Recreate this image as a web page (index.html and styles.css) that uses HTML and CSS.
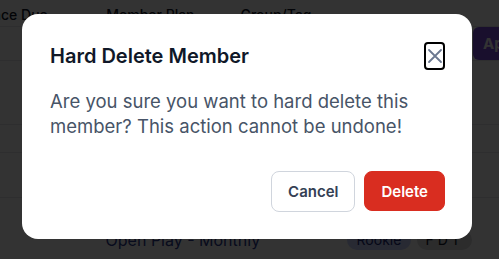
FILE: index.html
```html
<html lang="en">
<head>
<meta charset="UTF-8" />
<meta name="viewport" content="width=device-width, initial-scale=1" />
<title>Members</title>
<link rel="stylesheet" href="styles.css">
</head>
<body>
  <main class="page">
    <div class="table">
      <div class="row head">
        <div class="cell c1">Balance Due</div>
        <div class="cell c2">Member Plan</div>
        <div class="cell c3">Group/Tag</div>
      </div>
      <div class="row r1">
        <div class="cell c1"></div>
        <div class="cell c2"></div>
        <div class="cell c3"></div>
        <button class="apply">Apply</button>
      </div>
      <div class="row r2"></div>
      <div class="row r3"></div>
      <div class="row r4"></div>
      <div class="row r5">
        <div class="cell c1"></div>
        <div class="cell c2 plan">Open Play - Monthly</div>
        <div class="cell c3 tags">
          <span class="badge rookie">Rookie</span>
          <span class="badge grey">FDT</span>
        </div>
      </div>
    </div>
  </main>

  <div class="overlay">
    <div class="modal" role="dialog">
      <div class="modal-head">
        <h2 class="modal-title">Hard Delete Member</h2>
        <button class="close" aria-label="Close">
          <svg width="16" height="16" viewBox="0 0 16 16"><path d="M2 2 L14 14 M14 2 L2 14" stroke="#6b7890" stroke-width="1.8" stroke-linecap="round" fill="none"/></svg>
        </button>
      </div>
      <p class="modal-text">Are you sure you want to hard delete this member? This action cannot be undone!</p>
      <div class="modal-foot">
        <button class="btn cancel">Cancel</button>
        <button class="btn danger">Delete</button>
      </div>
    </div>
  </div>
</body>
</html>
```

FILE: styles.css
```css
*{box-sizing:border-box}
html,body{height:100%}
body{
  margin:0;
  font-family: Inter, "Noto Sans", Arial, sans-serif;
  background:#fff;
  color:#101828;
  overflow:hidden;
}

/* table behind the dialog */
.page{ margin-left:-36px; }
.row{
  display:flex;
  align-items:center;
  border-bottom:1px solid #e4e7ec;
  position:relative;
}
.row.head{ height:27px; align-items:flex-end; padding-bottom:3px; font-size:14px; font-weight:500; color:#101828; }
.row.r1{ height:34px; }
.row.r2{ height:64px; }
.row.r3{ height:28px; }
.row.r4{ height:45px; }
.row.r5{ height:61px; border-bottom:none; align-items:flex-start; padding-top:32px; }
.cell{ font-size:14px; white-space:nowrap; }
.c1{ width:143px; }
.c2{ width:135px; }
.c3{ width:260px; }
.plan{ color:#2b3a8f; font-size:16px; }
.tags{ display:flex; gap:6px; padding-left:106px; }
.badge{
  display:inline-block;
  padding:1px 10px;
  border-radius:999px;
  font-size:14px;
  line-height:18px;
}
.rookie{ background:#c7d2fe; color:#1e2a78; }
.grey{ background:#d9dadc; color:#101828; letter-spacing:4px; padding:1px 8px; }
.apply{
  position:absolute; left:509px; top:0;
  height:33px; width:80px;
  border:none; border-radius:6px 0 0 6px;
  background:#7c4ddf; color:#fff;
  font:700 15px Inter, sans-serif;
  text-align:left; padding-left:10px;
}

/* dialog */
.overlay{
  position:fixed; inset:0;
  background:rgba(0,0,0,.8);
  display:flex;
  align-items:flex-start;
  padding:14px 0 0 22px;
}
.modal{
  width:450px;
  height:225px;
  background:#fff;
  border-radius:16px;
  padding:28px 27px 27px 28px;
  display:flex;
  flex-direction:column;
}
.modal-head{
  display:flex;
  align-items:center;
  justify-content:space-between;
}
.modal-title{
  margin:0;
  font-size:20px;
  line-height:28px;
  font-weight:600;
  color:#101828;
}
.close{
  width:21px; height:28px;
  padding:0;
  border:2px solid #000;
  border-radius:4px;
  background:#fff;
  display:grid; place-items:center;
}
.modal-text{
  margin:19px 0 0;
  font-size:18.5px;
  line-height:24.5px;
  color:#475467;
}
.modal-foot{
  margin-top:auto;
  display:flex;
  justify-content:flex-end;
  gap:9px;
}
.btn{
  height:41px;
  padding:0 16px;
  border-radius:8px;
  font:600 15px Inter, sans-serif;
  cursor:pointer;
}
.cancel{ background:#fff; color:#344054; border:1px solid #d0d5dd; }
.danger{ background:#d92d20; color:#fff; border:1px solid #d92d20; height:40px; }
```
